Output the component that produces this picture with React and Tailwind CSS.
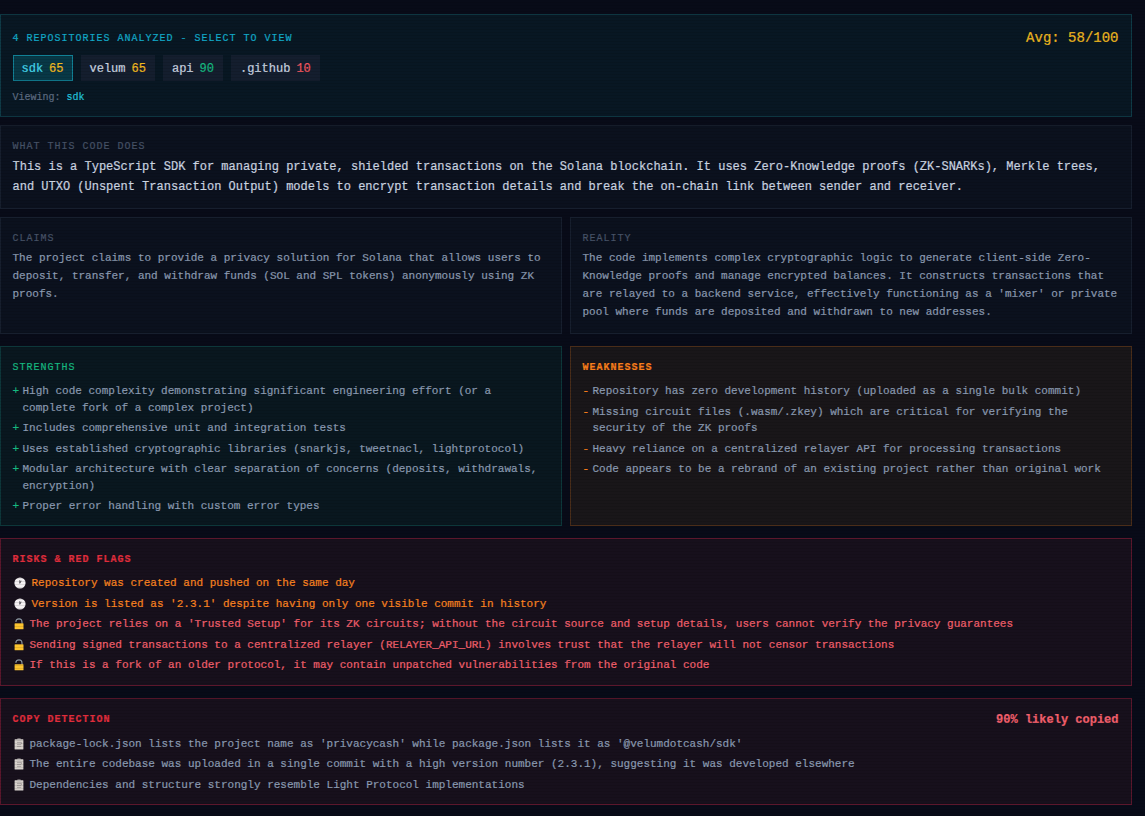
import { useState } from 'react'

const REPOS = [
    { name: 'sdk', score: 65 },
    { name: 'velum', score: 65 },
    { name: 'api', score: 90 },
    { name: '.github', score: 10 },
]

const STRENGTHS = [
    'High code complexity demonstrating significant engineering effort (or a complete fork of a complex project)',
    'Includes comprehensive unit and integration tests',
    'Uses established cryptographic libraries (snarkjs, tweetnacl, lightprotocol)',
    'Modular architecture with clear separation of concerns (deposits, withdrawals, encryption)',
    'Proper error handling with custom error types',
]

const WEAKNESSES = [
    'Repository has zero development history (uploaded as a single bulk commit)',
    'Missing circuit files (.wasm/.zkey) which are critical for verifying the security of the ZK proofs',
    'Heavy reliance on a centralized relayer API for processing transactions',
    'Code appears to be a rebrand of an existing project rather than original work',
]

const TIME_FLAGS = [
    'Repository was created and pushed on the same day',
    "Version is listed as '2.3.1' despite having only one visible commit in history",
]

const SECURITY_FLAGS = [
    "The project relies on a 'Trusted Setup' for its ZK circuits; without the circuit source and setup details, users cannot verify the privacy guarantees",
    'Sending signed transactions to a centralized relayer (RELAYER_API_URL) involves trust that the relayer will not censor transactions',
    'If this is a fork of an older protocol, it may contain unpatched vulnerabilities from the original code',
]

const COPY_EVIDENCE = [
    "package-lock.json lists the project name as 'privacycash' while package.json lists it as '@velumdotcash/sdk'",
    'The entire codebase was uploaded in a single commit with a high version number (2.3.1), suggesting it was developed elsewhere',
    'Dependencies and structure strongly resemble Light Protocol implementations',
]

function scoreColor(score) {
    if (score >= 80) return 'text-[#16b981]'
    if (score >= 50) return 'text-[#f0b91f]'
    return 'text-[#f0565f]'
}

function ClockIcon() {
    return (
        <svg viewBox="0 0 12 12" className="w-3 h-3 shrink-0">
            <circle cx="6" cy="6" r="5.6" fill="#f4f0f3" />
            <path d="M5.8 6.4V3.2M5.8 6.2L7.2 3.8" stroke="#4b4950" strokeWidth="0.9" fill="none" />
        </svg>
    )
}

function LockIcon() {
    return (
        <svg viewBox="0 0 10 12" className="w-2.5 h-3 shrink-0">
            <path d="M1.8 3.9C1.9 2 3.2 0.9 5 0.9s3 1.2 3 3V6" stroke="#8d9aa3" strokeWidth="1.1" fill="none" />
            <rect x="0.6" y="5.2" width="8.9" height="6" rx="0.5" fill="#fcc430" />
        </svg>
    )
}

function ClipboardIcon() {
    return (
        <svg viewBox="0 0 10 12" className="w-2.5 h-3 shrink-0">
            <rect x="0.6" y="1.2" width="8.8" height="10.2" rx="0.5" fill="#d8d2cd" />
            <rect x="3.2" y="0.4" width="3.6" height="2" rx="0.5" fill="#b9b4b3" />
            <path d="M3 4.4h4.4v1.8M3 6.4h4M3 8.4h4.2" stroke="#9a9594" strokeWidth="0.8" fill="none" />
        </svg>
    )
}

function Label({ className, children }) {
    return <h3 className={`text-[10px] leading-[15px] tracking-[1px] ${className}`}>{children}</h3>
}

function SignList({ items, sign, signClass }) {
    return (
        <ul className="mt-2 flex flex-col gap-1 text-[11px] leading-[16.5px] text-[#8b9bb2]">
            {items.map((item) => (
                <li key={item} className="flex gap-1">
                    <span className={`w-1.5 shrink-0 ${signClass}`}>{sign}</span>
                    <span>{item}</span>
                </li>
            ))}
        </ul>
    )
}

export default function App() {
    const [selected, setSelected] = useState('sdk')

    return (
        <div className="relative h-[816px] overflow-hidden bg-[#080b18] pt-3.5 font-['Liberation_Mono',monospace] [-webkit-text-stroke:0.22px]">
            <div className="w-[1132px]">
                {/* Repo picker */}
                <section className="h-[103px] border border-[#0f3b47] bg-[#081723] py-3 pr-[12.5px] pl-[11.5px]">
                    <div className="flex items-center justify-between h-[21px]">
                        <Label className="pt-0.5 text-[#12a9c8]">4 REPOSITORIES ANALYZED - SELECT TO VIEW</Label>
                        <span className="text-sm text-[#f0b91f]">Avg: 58/100</span>
                    </div>
                    <div className="mt-[7px] flex gap-2">
                        {REPOS.map((repo) => (
                            <button
                                key={repo.name}
                                onClick={() => setSelected(repo.name)}
                                className={`flex gap-1.5 border px-2 pt-[5px] pb-[3px] text-xs cursor-pointer ${repo.name === selected
                                    ? 'border-[#118095] bg-[#083846] text-[#45d9ee]'
                                    : 'border-[#141e2e] bg-[#141e2e] text-[#cbd5e1]'
                                    }`}
                            >
                                <span>{repo.name}</span>
                                <span className={scoreColor(repo.score)}>{repo.score}</span>
                            </button>
                        ))}
                    </div>
                    <p className="mt-[9px] text-[10px] leading-[15px] text-[#5d6b81]">
                        Viewing: <span className="text-[#22c3dd]">{selected}</span>
                    </p>
                </section>

                {/* Summary */}
                <section className="mt-2 h-[84px] border border-[#171f2e] bg-[#0b111e] pt-[13px] pr-3 pl-[11.5px]">
                    <Label className="text-[#465266]">WHAT THIS CODE DOES</Label>
                    <p className="mt-[3px] text-xs leading-5 text-[#cbd5e1]">
                        This is a TypeScript SDK for managing private, shielded transactions on the Solana blockchain. It uses Zero-Knowledge proofs (ZK-SNARKs), Merkle trees, and UTXO (Unspent Transaction Output) models to encrypt transaction details and break the on-chain link between sender and receiver.
                    </p>
                </section>

                <div className="mt-2 grid h-[117px] grid-cols-2 gap-2 text-[11px] leading-[18px] text-[#8b9bb2]">
                    <section className="border border-[#171f2e] bg-[#0b111e] pt-[13px] pr-3 pl-[11.5px]">
                        <Label className="text-[#465266]">CLAIMS</Label>
                        <p className="mt-[3px]">
                            The project claims to provide a privacy solution for Solana that allows users to deposit, transfer, and withdraw funds (SOL and SPL tokens) anonymously using ZK proofs.
                        </p>
                    </section>
                    <section className="border border-[#171f2e] bg-[#0b111e] pt-[13px] pr-3 pl-[11.5px]">
                        <Label className="text-[#465266]">REALITY</Label>
                        <p className="mt-[3px]">
                            The code implements complex cryptographic logic to generate client-side Zero-Knowledge proofs and manage encrypted balances. It constructs transactions that are relayed to a backend service, effectively functioning as a 'mixer' or private pool where funds are deposited and withdrawn to new addresses.
                        </p>
                    </section>
                </div>

                <div className="mt-3 grid h-[180px] grid-cols-2 gap-2">
                    <section className="border border-[#0d373a] bg-[#09171f] pt-[13px] pr-3 pl-[11.5px]">
                        <Label className="text-[#16b981]">STRENGTHS</Label>
                        <SignList items={STRENGTHS} sign="+" signClass="text-[#16b981]" />
                    </section>
                    <section className="border border-[#4a2d19] bg-[#191619] pt-[13px] pr-3 pl-[11.5px]">
                        <Label className="font-bold text-[#f97f1b]">WEAKNESSES</Label>
                        <SignList items={WEAKNESSES} sign="-" signClass="text-[#f97f1b]" />
                    </section>
                </div>

                {/* Risks */}
                <section className="mt-3 h-[148px] border border-[#5b172c] bg-[#17101c] pt-[13px] pr-3 pl-[11.5px]">
                    <Label className="font-bold text-[#e02d3c]">RISKS &amp; RED FLAGS</Label>
                    <ul className="mt-2 flex flex-col gap-1 text-[11px] leading-[16.5px]">
                        {TIME_FLAGS.map((flag) => (
                            <li key={flag} className="flex items-center gap-1.5 pl-px text-[#fb8420]">
                                <ClockIcon />
                                {flag}
                            </li>
                        ))}
                        {SECURITY_FLAGS.map((flag) => (
                            <li key={flag} className="flex items-center gap-1.5 pl-px text-[#f4606d]">
                                <LockIcon />
                                {flag}
                            </li>
                        ))}
                    </ul>
                </section>

                {/* Copy detection */}
                <section className="mt-3 h-[107px] border border-[#5b172c] bg-[#17101c] py-3 pr-[12.5px] pl-[11.5px]">
                    <div className="flex h-4 items-center justify-between">
                        <Label className="font-bold text-[#e02d3c]">COPY DETECTION</Label>
                        <span className="pt-px text-xs font-bold text-[#f4606d]">90% likely copied</span>
                    </div>
                    <ul className="mt-[8.5px] flex flex-col gap-1 text-[11px] leading-[16.5px] text-[#8b9bb2]">
                        {COPY_EVIDENCE.map((item) => (
                            <li key={item} className="flex items-center gap-1.5 pl-px">
                                <ClipboardIcon />
                                {item}
                            </li>
                        ))}
                    </ul>
                </section>
            </div>

            {/* CRT scanlines */}
            <div className="pointer-events-none absolute inset-0 bg-[repeating-linear-gradient(0deg,rgba(0,0,0,0.1)_0px,rgba(0,0,0,0.1)_1px,transparent_1px,transparent_3px)]" />
        </div>
    )
}
